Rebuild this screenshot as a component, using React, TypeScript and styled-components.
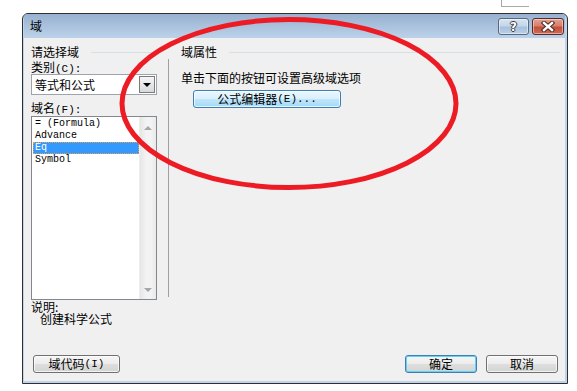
import React from "react";
import styled, { createGlobalStyle } from "styled-components";

const Global = createGlobalStyle`
  html, body { margin: 0; padding: 0; background: #ffffff; }
  body { font-family: "Noto Sans CJK SC", "Noto Sans", sans-serif; font-size: 12px; color: #000; }
  * { box-sizing: border-box; }
`;

const Page = styled.div`
  position: relative;
  width: 577px;
  height: 391px;
  padding: 13px 0 0 22px;
  overflow: hidden;
`;

const BackFragment = styled.div`
  position: absolute;
  left: 501px;
  top: 0;
  width: 28px;
  height: 7px;
  border-left: 1px solid #a8a8a8;
  border-bottom: 1px solid #a8a8a8;
`;

const Window = styled.div`
  width: 546px;
  height: 371px;
  border: 1px solid #2f2f2f;
  border-radius: 6px 6px 0 0;
  background: #bdd4eb;
  padding: 0 2px 2px 1px;
  display: flex;
  flex-direction: column;
  overflow: hidden;
`;

const TitleBar = styled.div`
  height: 24px;
  flex: none;
  display: flex;
  align-items: center;
  padding: 0 1px 0 6px;
  background: linear-gradient(#97b1cf, #bcd2ea);
`;

const Title = styled.span`
  flex: 1;
  font-size: 12px;
  line-height: 14px;
  color: #000;
`;

const CaptionButtons = styled.div`
  display: flex;
  gap: 3px;
  align-self: flex-start;
  margin-top: 4px;
`;

const CaptionButton = styled.div<{ $close?: boolean }>`
  width: ${(p) => (p.$close ? 32 : 31)}px;
  height: 17px;
  border: 1px solid ${(p) => (p.$close ? "#5a2b25" : "#59687a")};
  border-radius: 3px;
  display: flex;
  align-items: center;
  justify-content: center;
  background: ${(p) =>
    p.$close
      ? "linear-gradient(#e3a193 0%, #d7806f 45%, #c4503c 55%, #cf6a55 100%)"
      : "linear-gradient(#d7e4f2 0%, #c4d6ea 45%, #a9c0dc 55%, #b9cfe8 100%)"};
  box-shadow: inset 0 0 0 1px rgba(255, 255, 255, 0.45);
`;

const HelpGlyph = styled.span`
  font-family: "DejaVu Sans", sans-serif;
  font-weight: bold;
  font-size: 12px;
  line-height: 12px;
  color: #ffffff;
  text-shadow: 1px 0 #3a3a3a, -1px 0 #3a3a3a, 0 1px #3a3a3a, 0 -1px #3a3a3a;
`;

const Client = styled.div`
  flex: 1;
  background: #f0f0f0;
  display: flex;
  flex-direction: column;
  padding: 7px 5px 7px 7px;
`;

const Main = styled.div`
  flex: 1;
  display: flex;
  align-items: flex-start;
`;

const LeftCol = styled.div`
  width: 126px;
  flex: none;
  display: flex;
  flex-direction: column;
`;

const GroupHeader = styled.div`
  display: flex;
  align-items: center;
  gap: 12px;
  line-height: 14px;
  height: 14px;
  &::after {
    content: "";
    flex: 1;
    height: 1px;
    background: #d5dfe5;
  }
`;

const Label = styled.div<{ $top?: number }>`
  line-height: 14px;
  height: 14px;
  margin-top: ${(p) => p.$top ?? 0}px;
  white-space: nowrap;
`;

const Mnemonic = styled.span`
  font-family: "Liberation Mono", "DejaVu Sans Mono", monospace;
  font-size: 11px;
`;

const Combo = styled.div`
  height: 21px;
  border: 1px solid #9ea4ab;
  background: #ffffff;
  display: flex;
  align-items: center;
  padding: 1px 1px 1px 3px;
`;

const ComboText = styled.span`
  flex: 1;
  line-height: 14px;
`;

const DropButton = styled.div`
  width: 16px;
  height: 17px;
  border: 1px solid #7a7a7a;
  background: linear-gradient(#f5f5f5, #d9d9d9);
  display: flex;
  align-items: center;
  justify-content: center;
`;

const DownTri = styled.div<{ $color?: string; $size?: number }>`
  width: 0;
  height: 0;
  border-left: ${(p) => p.$size ?? 4}px solid transparent;
  border-right: ${(p) => p.$size ?? 4}px solid transparent;
  border-top: ${(p) => p.$size ?? 4}px solid ${(p) => p.$color ?? "#000"};
`;

const UpTri = styled.div<{ $color?: string; $size?: number }>`
  width: 0;
  height: 0;
  border-left: ${(p) => p.$size ?? 4}px solid transparent;
  border-right: ${(p) => p.$size ?? 4}px solid transparent;
  border-bottom: ${(p) => p.$size ?? 4}px solid ${(p) => p.$color ?? "#000"};
`;

const ListBox = styled.div`
  margin-top: 1px;
  height: 184px;
  border: 1px solid #828790;
  background: #ffffff;
  display: flex;
`;

const Items = styled.div`
  flex: 1;
  padding: 1px 0 0 1px;
  display: flex;
  flex-direction: column;
`;

const Item = styled.div<{ $selected?: boolean }>`
  height: 12px;
  line-height: 12px;
  padding-left: 2px;
  font-family: "Liberation Mono", "DejaVu Sans Mono", monospace;
  font-size: 10px;
  white-space: pre;
  color: ${(p) => (p.$selected ? "#ffffff" : "#000000")};
  background: ${(p) => (p.$selected ? "#3399ff" : "transparent")};
  outline: ${(p) => (p.$selected ? "1px dotted #e8a040" : "none")};
  outline-offset: -1px;
`;

const ScrollBar = styled.div`
  width: 17px;
  flex: none;
  background: linear-gradient(90deg, #e6e6e6 0%, #f3f3f3 40%, #f3f3f3 70%, #e9e9e9 100%);
  border-left: 1px solid #ececec;
  display: flex;
  flex-direction: column;
  align-items: center;
  justify-content: space-between;
  padding: 9px 0 7px;
`;

const Description = styled.div`
  margin-top: 1px;
  line-height: 12px;
`;

const DescBody = styled.span`
  display: block;
  padding-left: 9px;
`;

const VSeparator = styled.div`
  width: 1px;
  height: 238px;
  margin: 14px 12px 0 11px;
  background: #a0a0a0;
  flex: none;
`;

const RightCol = styled.div`
  flex: 1;
  display: flex;
  flex-direction: column;
`;

const Hint = styled.div`
  margin-top: 12px;
  line-height: 14px;
`;

const Button = styled.button<{ $w: number; $variant?: "default" | "hot" }>`
  width: ${(p) => p.$w}px;
  height: 18px;
  padding: 0;
  font-family: "Noto Sans CJK SC", "Noto Sans", sans-serif;
  font-size: 12px;
  line-height: 14px;
  color: #000;
  border-radius: 3px;
  border: 1px solid ${(p) => (p.$variant ? "#3c7fb1" : "#707070")};
  background: ${(p) =>
    p.$variant === "hot"
      ? "linear-gradient(#eaf6fd 0%, #d9f0fc 50%, #bee6fd 51%, #a7d9f5 100%)"
      : "linear-gradient(#f6f6f6 0%, #ececec 50%, #dedede 51%, #d4d4d4 100%)"};
  box-shadow: ${(p) =>
    p.$variant === "default"
      ? "inset 0 0 0 1px #63d0f5"
      : "inset 0 0 0 1px rgba(255,255,255,0.7)"};
  display: flex;
  align-items: center;
  justify-content: center;
  white-space: pre;
  flex: none;
`;

const FormulaButton = styled(Button)`
  margin: 5px 0 0 12px;
`;

const Footer = styled.div`
  display: flex;
  align-items: center;
  gap: 9px;
  padding: 0 2px 1px 2px;
`;

const Spacer = styled.div`
  flex: 1;
`;

const Overlay = styled.svg`
  position: absolute;
  left: 0;
  top: 0;
  pointer-events: none;
`;

export default function App() {
  return (
    <>
      <Global />
      <Page>
        <BackFragment />
        <Window>
          <TitleBar>
            <Title>域</Title>
            <CaptionButtons>
              <CaptionButton>
                <HelpGlyph>?</HelpGlyph>
              </CaptionButton>
              <CaptionButton $close>
                <svg width="14" height="11" viewBox="0 0 14 11">
                  <path d="M3 2 L11 9 M11 2 L3 9" stroke="#4a2a24" strokeWidth="4.4" strokeLinecap="square" />
                  <path d="M3 2 L11 9 M11 2 L3 9" stroke="#ffffff" strokeWidth="2.4" strokeLinecap="square" />
                </svg>
              </CaptionButton>
            </CaptionButtons>
          </TitleBar>
          <Client>
            <Main>
              <LeftCol>
                <GroupHeader>请选择域</GroupHeader>
                <Label $top={1}>
                  类别<Mnemonic>(C):</Mnemonic>
                </Label>
                <Combo>
                  <ComboText>等式和公式</ComboText>
                  <DropButton>
                    <DownTri $size={4} />
                  </DropButton>
                </Combo>
                <Label $top={6}>
                  域名<Mnemonic>(F):</Mnemonic>
                </Label>
                <ListBox>
                  <Items>
                    <Item>= (Formula)</Item>
                    <Item>Advance</Item>
                    <Item $selected>Eq</Item>
                    <Item>Symbol</Item>
                  </Items>
                  <ScrollBar>
                    <UpTri $color="#a6a6a6" $size={4} />
                    <DownTri $color="#a6a6a6" $size={4} />
                  </ScrollBar>
                </ListBox>
                <Description>
                  说明:
                  <DescBody>创建科学公式</DescBody>
                </Description>
              </LeftCol>
              <VSeparator />
              <RightCol>
                <GroupHeader>域属性</GroupHeader>
                <Hint>单击下面的按钮可设置高级域选项</Hint>
                <FormulaButton $w={148} $variant="hot">
                  公式编辑器<Mnemonic>(E)...</Mnemonic>
                </FormulaButton>
              </RightCol>
            </Main>
            <Footer>
              <Button $w={87}>
                域代码<Mnemonic>(I)</Mnemonic>
              </Button>
              <Spacer />
              <Button $w={72} $variant="default">确定</Button>
              <Button $w={72}>取消</Button>
            </Footer>
          </Client>
        </Window>
        <Overlay width="577" height="391" viewBox="0 0 577 391">
          <ellipse cx="289" cy="103.5" rx="167" ry="84" fill="none" stroke="#ed1c24" strokeWidth="5" />
        </Overlay>
      </Page>
    </>
  );
}
